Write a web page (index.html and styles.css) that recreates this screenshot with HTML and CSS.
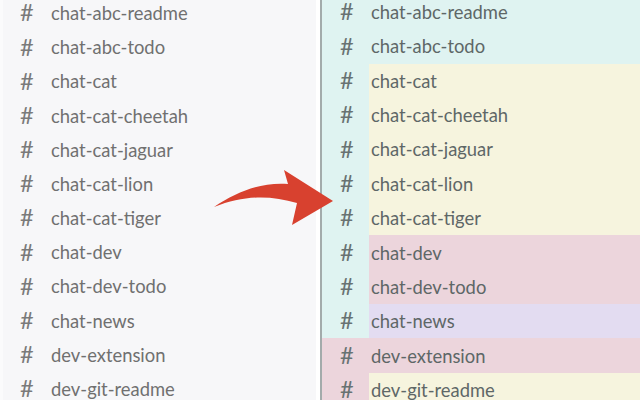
FILE: index.html
```html
<!DOCTYPE html>
<html>
<head>
<meta charset="utf-8">
<link rel="stylesheet" href="styles.css">
</head>
<body>
<div class="page">
  <div class="left">
    <ul class="list">
      <li class="lrow"><span class="hash">#</span><span class="name">chat-abc-readme</span></li>
      <li class="lrow"><span class="hash">#</span><span class="name">chat-abc-todo</span></li>
      <li class="lrow"><span class="hash">#</span><span class="name">chat-cat</span></li>
      <li class="lrow"><span class="hash">#</span><span class="name">chat-cat-cheetah</span></li>
      <li class="lrow"><span class="hash">#</span><span class="name">chat-cat-jaguar</span></li>
      <li class="lrow"><span class="hash">#</span><span class="name">chat-cat-lion</span></li>
      <li class="lrow"><span class="hash">#</span><span class="name">chat-cat-tiger</span></li>
      <li class="lrow"><span class="hash">#</span><span class="name">chat-dev</span></li>
      <li class="lrow"><span class="hash">#</span><span class="name">chat-dev-todo</span></li>
      <li class="lrow"><span class="hash">#</span><span class="name">chat-news</span></li>
      <li class="lrow"><span class="hash">#</span><span class="name">dev-extension</span></li>
      <li class="lrow"><span class="hash">#</span><span class="name">dev-git-readme</span></li>
    </ul>
  </div>
  <div class="gap"></div>
  <div class="right">
    <ul class="rlist">
      <li class="rrow"><span class="rhash cyan">#</span><span class="rname cyan">chat-abc-readme</span></li>
      <li class="rrow"><span class="rhash cyan">#</span><span class="rname cyan">chat-abc-todo</span></li>
      <li class="rrow"><span class="rhash cyan">#</span><span class="rname yellow">chat-cat</span></li>
      <li class="rrow"><span class="rhash cyan">#</span><span class="rname yellow">chat-cat-cheetah</span></li>
      <li class="rrow"><span class="rhash cyan">#</span><span class="rname yellow">chat-cat-jaguar</span></li>
      <li class="rrow"><span class="rhash cyan">#</span><span class="rname yellow">chat-cat-lion</span></li>
      <li class="rrow"><span class="rhash cyan">#</span><span class="rname yellow">chat-cat-tiger</span></li>
      <li class="rrow"><span class="rhash cyan">#</span><span class="rname pink">chat-dev</span></li>
      <li class="rrow"><span class="rhash cyan">#</span><span class="rname pink">chat-dev-todo</span></li>
      <li class="rrow"><span class="rhash cyan">#</span><span class="rname purple">chat-news</span></li>
      <li class="rrow"><span class="rhash pink">#</span><span class="rname pink">dev-extension</span></li>
      <li class="rrow"><span class="rhash pink">#</span><span class="rname yellow">dev-git-readme</span></li>
    </ul>
  </div>
  <svg class="arrow" width="640" height="400" viewBox="0 0 640 400">
    <path d="M214,207 C238,191 262,182 288,184 L284,170 L333,201 L292,225 L297,203 C270,195 244,195 214,207 Z" fill="#d8412f"/>
  </svg>
</div>
</body>
</html>
```

FILE: styles.css
```css
html, body {
  margin: 0;
  padding: 0;
  background: #ffffff;
}
.page {
  position: relative;
  width: 640px;
  height: 400px;
  overflow: hidden;
  display: flex;
  font-family: Lato, "Open Sans", sans-serif;
  font-size: 18.4px;
}
.left {
  width: 313px;
  border-left: 3px solid #fbfbfc;
  background: #f7f7f9;
}
.gap {
  width: 4px;
  background: #ffffff;
  border-right: 2px solid #a3abab;
}
.right {
  flex: 1;
  background: #ffffff;
}
.list, .rlist {
  list-style: none;
  margin: 0;
  padding: 0;
}
.list {
  margin-top: -4px;
}
.rlist {
  margin-top: -5.2px;
}
.lrow {
  height: 34.18px;
  display: flex;
  align-items: center;
  color: #707070;
}
.hash {
  width: 48px;
  padding-left: 17px;
  box-sizing: border-box;
  color: #7a7a7a;
  font-size: 23.5px;
  line-height: 1;
}
.rrow {
  height: 34.36px;
  display: flex;
  color: #5e6767;
}
.rhash {
  width: 47px;
  padding-left: 18px;
  box-sizing: border-box;
  display: flex;
  align-items: center;
  color: #687272;
  font-size: 23.5px;
  line-height: 1;
}
.rname {
  flex: 1;
  display: flex;
  align-items: center;
  padding-left: 2px;
}
.cyan { background: #dff3f1; }
.yellow { background: #f6f4de; }
.pink { background: #ecd5dc; }
.purple { background: #e3dcf1; }
.arrow {
  position: absolute;
  left: 0;
  top: 0;
}
```
